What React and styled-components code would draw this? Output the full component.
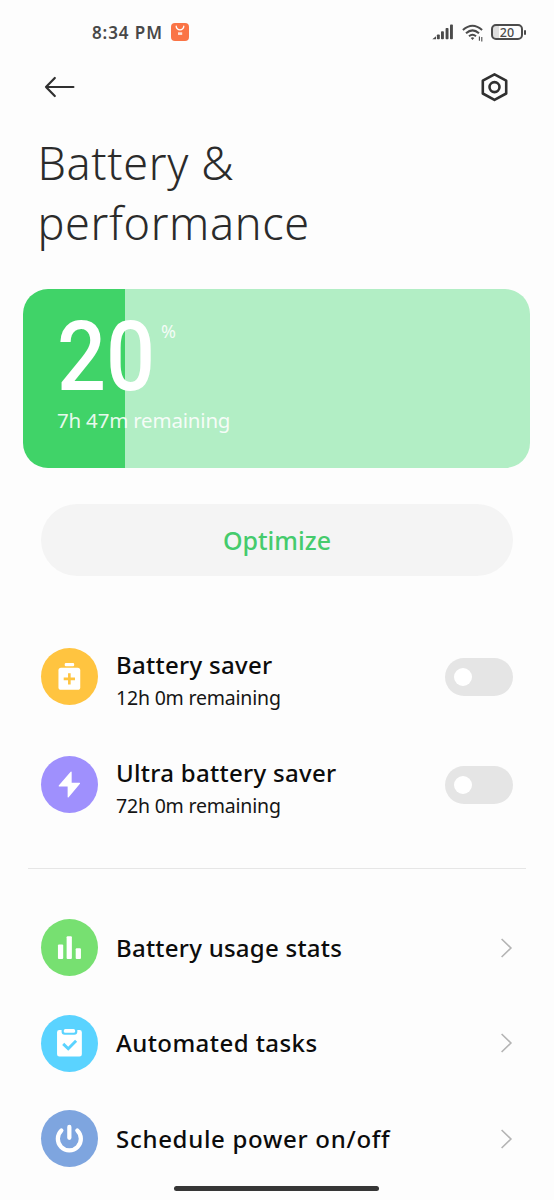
import React from 'react';
import styled, { createGlobalStyle } from 'styled-components';

const modes = [
  { id: 'saver', title: 'Battery saver', desc: '12h 0m remaining', color: '#ffc440', icon: <SaverIcon /> },
  { id: 'ultra', title: 'Ultra battery saver', desc: '72h 0m remaining', color: '#9f90fd', icon: <BoltIcon /> },
];

const links = [
  { id: 'stats', title: 'Battery usage stats', color: '#77e071', spacing: '0.25px', icon: <StatsIcon /> },
  { id: 'tasks', title: 'Automated tasks', color: '#5ad3ff', spacing: '0.45px', icon: <TasksIcon /> },
  { id: 'schedule', title: 'Schedule power on/off', color: '#7ea5df', spacing: '0.7px', icon: <PowerIcon /> },
];

function SaverIcon() {
  return (
    <svg width="57" height="57" viewBox="0 0 56.5 56.5">
      <rect x="23.5" y="14.8" width="9.4" height="3.2" rx="1.2" fill="#fff" />
      <rect x="17.3" y="19.6" width="21.6" height="21.8" rx="2.6" fill="#fff" />
      <path d="M28.1 25v11.2M22.5 30.6h11.2" stroke="#ffc440" strokeWidth="2.6" />
    </svg>
  );
}

function BoltIcon() {
  return (
    <svg width="57" height="57" viewBox="0 0 56.5 56.5">
      <path
        d="M29.4 15.6L17.6 29.2q-.5 1 .5 1H26.4V40.6q.3 1 1 .2L38.6 27.4q.5-1-.5-1H30.4V15.9q-.3-.9-1-.3z"
        fill="#fff"
      />
    </svg>
  );
}

function StatsIcon() {
  return (
    <svg width="57" height="57" viewBox="0 0 56.5 56.5">
      <g fill="#fff">
        <rect x="16.8" y="25.3" width="5.2" height="14.4" rx="1" />
        <rect x="25.4" y="17" width="5.2" height="22.7" rx="1" />
        <rect x="34.4" y="29" width="5.2" height="10.7" rx="1" />
      </g>
    </svg>
  );
}

function TasksIcon() {
  return (
    <svg width="57" height="57" viewBox="0 0 56.5 56.5">
      <path
        d="M18.2 14.8h2.2v1.8q0 3 3 3h9.6q3 0 3-3v-1.8h2.2q2.3 0 2.3 2.3v21.8q0 2.3-2.3 2.3h-20q-2.3 0-2.3-2.3V17.1q0-2.3 2.3-2.3z"
        fill="#fff"
      />
      <rect x="22.6" y="13.8" width="11.2" height="3.7" rx="1.5" fill="#fff" />
      <path d="M22 28.6l5 4.8 7.8-7.8" fill="none" stroke="#5ad3ff" strokeWidth="2.9" />
    </svg>
  );
}

function PowerIcon() {
  return (
    <svg width="57" height="57" viewBox="0 0 56.5 56.5">
      <g fill="none" stroke="#fff" strokeWidth="4.2" strokeLinecap="round">
        <path d="M20.2 20.4a11.4 11.4 0 1 0 15.8 0" />
        <path d="M28.1 16.8v10.8" />
      </g>
    </svg>
  );
}

function StatusBar() {
  return (
    <Status>
      <Clock>8:34 PM</Clock>
      <svg width="18" height="18" viewBox="0 0 18 18">
        <rect width="18" height="18" rx="4" fill="#fa7446" />
        <path d="M5.2 3.2a3.8 3.6 0 0 0 7.6 0" fill="none" stroke="#fff" strokeWidth="1.3" strokeLinecap="round" />
        <rect x="7" y="9.3" width="4.2" height="2.6" fill="#fff" opacity=".8" />
      </svg>
      <StatusIcons>
        <svg width="22" height="16" viewBox="0 0 22 16">
          <g fill="#4b4b4b">
            <path d="M.3 15.2L4 12.3v2.9z" />
            <rect x="4.9" y="10.4" width="2.9" height="4.8" rx=".8" />
            <rect x="9" y="7.2" width="2.9" height="8" rx=".8" />
            <rect x="13.6" y="4" width="2.9" height="11.2" rx=".8" />
            <rect x="18" y=".4" width="2.9" height="14.8" rx=".8" />
          </g>
        </svg>
        <Wifi width="22" height="18" viewBox="0 0 22 18">
          <g fill="none" stroke="#4b4b4b" strokeWidth="2">
            <path d="M.9 6.1q9.6-8.6 19.2 0" />
            <path d="M4 9.3q6.5-5.8 13 0" />
            <path d="M7 12.2q3.5-3 7 0" />
          </g>
          <path d="M8.7 14q1.8-1.4 3.6 0l-1.8 2z" fill="#4b4b4b" />
          <path d="M17.4 12.4v4.4M19.8 13v4.4" stroke="#4b4b4b" strokeWidth="1.1" />
        </Wifi>
        <BatteryShell>
          <BatteryText>20</BatteryText>
        </BatteryShell>
        <BatteryTip />
      </StatusIcons>
    </Status>
  );
}

function App() {
  return (
    <Page>
      <GlobalStyle />
      <StatusBar />
      <Header>
        <svg width="32" height="22" viewBox="0 0 32 22">
          <path
            d="M29.4 11H2M10.8 2L2 11l8.8 9"
            fill="none"
            stroke="#303030"
            strokeWidth="2.2"
            strokeLinecap="round"
            strokeLinejoin="round"
          />
        </svg>
        <svg width="28" height="30" viewBox="0 0 28 30">
          <g fill="none" stroke="#303030" strokeWidth="2.6" strokeLinejoin="round">
            <path d="M13.5 2.3L25.2 8.7v12.8L13.5 27.9 1.8 21.5V8.7z" />
            <circle cx="13.5" cy="15.1" r="5" />
          </g>
        </svg>
      </Header>
      <Title>
        <TitleLine>Battery &amp;</TitleLine>
        <TitleLine>performance</TitleLine>
      </Title>
      <LevelCard>
        <LevelRow>
          <Level>20</Level>
          <Percent>%</Percent>
        </LevelRow>
        <Remaining>7h 47m remaining</Remaining>
      </LevelCard>
      <Optimize>Optimize</Optimize>
      <ModeList>
        {modes.map((mode) => (
          <ModeRow key={mode.id}>
            <Circle $color={mode.color}>{mode.icon}</Circle>
            <ModeText>
              <RowTitle>{mode.title}</RowTitle>
              <RowDesc>{mode.desc}</RowDesc>
            </ModeText>
            <Toggle type="button" role="switch" aria-checked="false" aria-label={mode.title}>
              <Knob />
            </Toggle>
          </ModeRow>
        ))}
      </ModeList>
      <Divider />
      <LinkList>
        {links.map((link) => (
          <LinkRow key={link.id}>
            <Circle $color={link.color}>{link.icon}</Circle>
            <LinkTitle $spacing={link.spacing}>{link.title}</LinkTitle>
            <svg width="13" height="20" viewBox="0 0 13 20">
              <path d="M1.6 1L10.9 10l-9.3 9" fill="none" stroke="#b4b4b4" strokeWidth="1.6" />
            </svg>
          </LinkRow>
        ))}
      </LinkList>
      <HomeBar />
    </Page>
  );
}

export default App;

const GlobalStyle = createGlobalStyle`
  * {
    box-sizing: border-box;
  }

  body {
    margin: 0;
    background-color: #fdfdfd;
    font-family: 'Noto Sans', 'Open Sans', sans-serif;
  }

  svg {
    display: block;
    flex: none;
  }
`;

const Page = styled.main`
  display: flex;
  flex-direction: column;
  width: 554px;
  height: 1200px;
  overflow: hidden;
  white-space: nowrap;
`;

const Status = styled.div`
  display: flex;
  align-items: center;
  height: 64px;
  padding: 0 28px 0 92px;
`;

const Clock = styled.div`
  width: 79px;
  padding-top: 1px;
  font-size: 17px;
  font-weight: 600;
  line-height: 20px;
  letter-spacing: 0.9px;
  color: #484848;
`;

const StatusIcons = styled.div`
  display: flex;
  align-items: center;
  margin-left: auto;
`;

const Wifi = styled.svg`
  margin: 1px 7px 0 8px;
`;

const BatteryShell = styled.div`
  display: flex;
  align-items: center;
  justify-content: center;
  width: 32px;
  height: 16px;
  border: 2px solid #4b4b4b;
  border-radius: 5px;
  background: linear-gradient(90deg, #dedede 6px, transparent 6px);
`;

const BatteryText = styled.span`
  padding-top: 1px;
  font-size: 12.5px;
  font-weight: 500;
  line-height: 12px;
  color: #4b4b4b;
`;

const BatteryTip = styled.div`
  width: 2px;
  height: 5px;
  margin-left: 1px;
  border-radius: 1px;
  background-color: #4b4b4b;
`;

const Header = styled.header`
  display: flex;
  align-items: center;
  justify-content: space-between;
  height: 46px;
  padding: 0 45px 0 44px;
`;

const Title = styled.h1`
  margin: 23px 0 0;
  padding-left: 37.5px;
  font-size: 45px;
  font-weight: 300;
  line-height: 60px;
  letter-spacing: 0.65px;
  color: #2b2b2b;
`;

const TitleLine = styled.span`
  display: block;
`;

const LevelCard = styled.section`
  width: 507px;
  height: 179px;
  margin: 36px 0 0 23.4px;
  padding: 28px 0 0 33.6px;
  border-radius: 25px;
  background: linear-gradient(90deg, #40d368 101.6px, #b2eec5 101.6px);
  color: #fff;
`;

const LevelRow = styled.div`
  display: flex;
  height: 80px;
`;

const Level = styled.div`
  width: 104px;
  font-family: Roboto, sans-serif;
  font-size: 97px;
  font-weight: 500;
  line-height: 81px;
  transform: scaleX(0.89);
  transform-origin: left;
`;

const Percent = styled.div`
  padding-top: 3px;
  font-size: 18px;
  line-height: 22px;
  opacity: 0.85;
`;

const Remaining = styled.div`
  margin-top: 9px;
  font-size: 20.5px;
  line-height: 28px;
  letter-spacing: -0.2px;
  opacity: 0.88;
`;

const Optimize = styled.button`
  width: 472px;
  height: 72px;
  margin: 36px 0 0 41px;
  padding: 0;
  border: 0;
  border-radius: 36px;
  background-color: #f4f4f4;
  font-family: inherit;
  font-size: 25px;
  font-weight: 500;
  color: #45cb6c;
`;

const ModeList = styled.div`
  display: flex;
  flex-direction: column;
  gap: 51px;
  padding: 72px 41px 0;
`;

const ModeRow = styled.div`
  display: flex;
  align-items: center;
  height: 57px;
`;

const Circle = styled.div`
  flex: none;
  width: 57px;
  height: 57px;
  margin-right: 18px;
  border-radius: 50%;
  background-color: ${({ $color }) => $color};
`;

const ModeText = styled.div`
  flex: 1;
  padding-top: 7px;
`;

const RowTitle = styled.div`
  font-size: 24px;
  font-weight: 500;
  line-height: 34px;
  letter-spacing: ${({ $spacing }) => $spacing || '0.3px'};
  color: #0c0c0c;
`;

const RowDesc = styled.div`
  font-size: 19.5px;
  line-height: 31px;
  letter-spacing: -0.2px;
  color: #151515;
`;

const Toggle = styled.button`
  display: flex;
  align-items: center;
  width: 68px;
  height: 38px;
  padding: 0 9px;
  border: 0;
  border-radius: 19px;
  background-color: #e5e5e5;
`;

const Knob = styled.span`
  width: 18px;
  height: 18px;
  border-radius: 50%;
  background-color: #fff;
`;

const Divider = styled.hr`
  flex: none;
  width: 498px;
  height: 1px;
  margin: 55px 0 0 28px;
  border: 0;
  background-color: #e6e6e6;
`;

const LinkList = styled.nav`
  display: flex;
  flex-direction: column;
  gap: 38.5px;
  padding: 50px 41px 0;
`;

const LinkRow = styled.div`
  display: flex;
  align-items: center;
  height: 57px;
`;

const LinkTitle = styled(RowTitle)`
  flex: 1;
`;

const HomeBar = styled.div`
  flex: none;
  width: 205px;
  height: 5px;
  margin: 19px 0 0 174px;
  border-radius: 3px;
  background-color: #363636;
`;
